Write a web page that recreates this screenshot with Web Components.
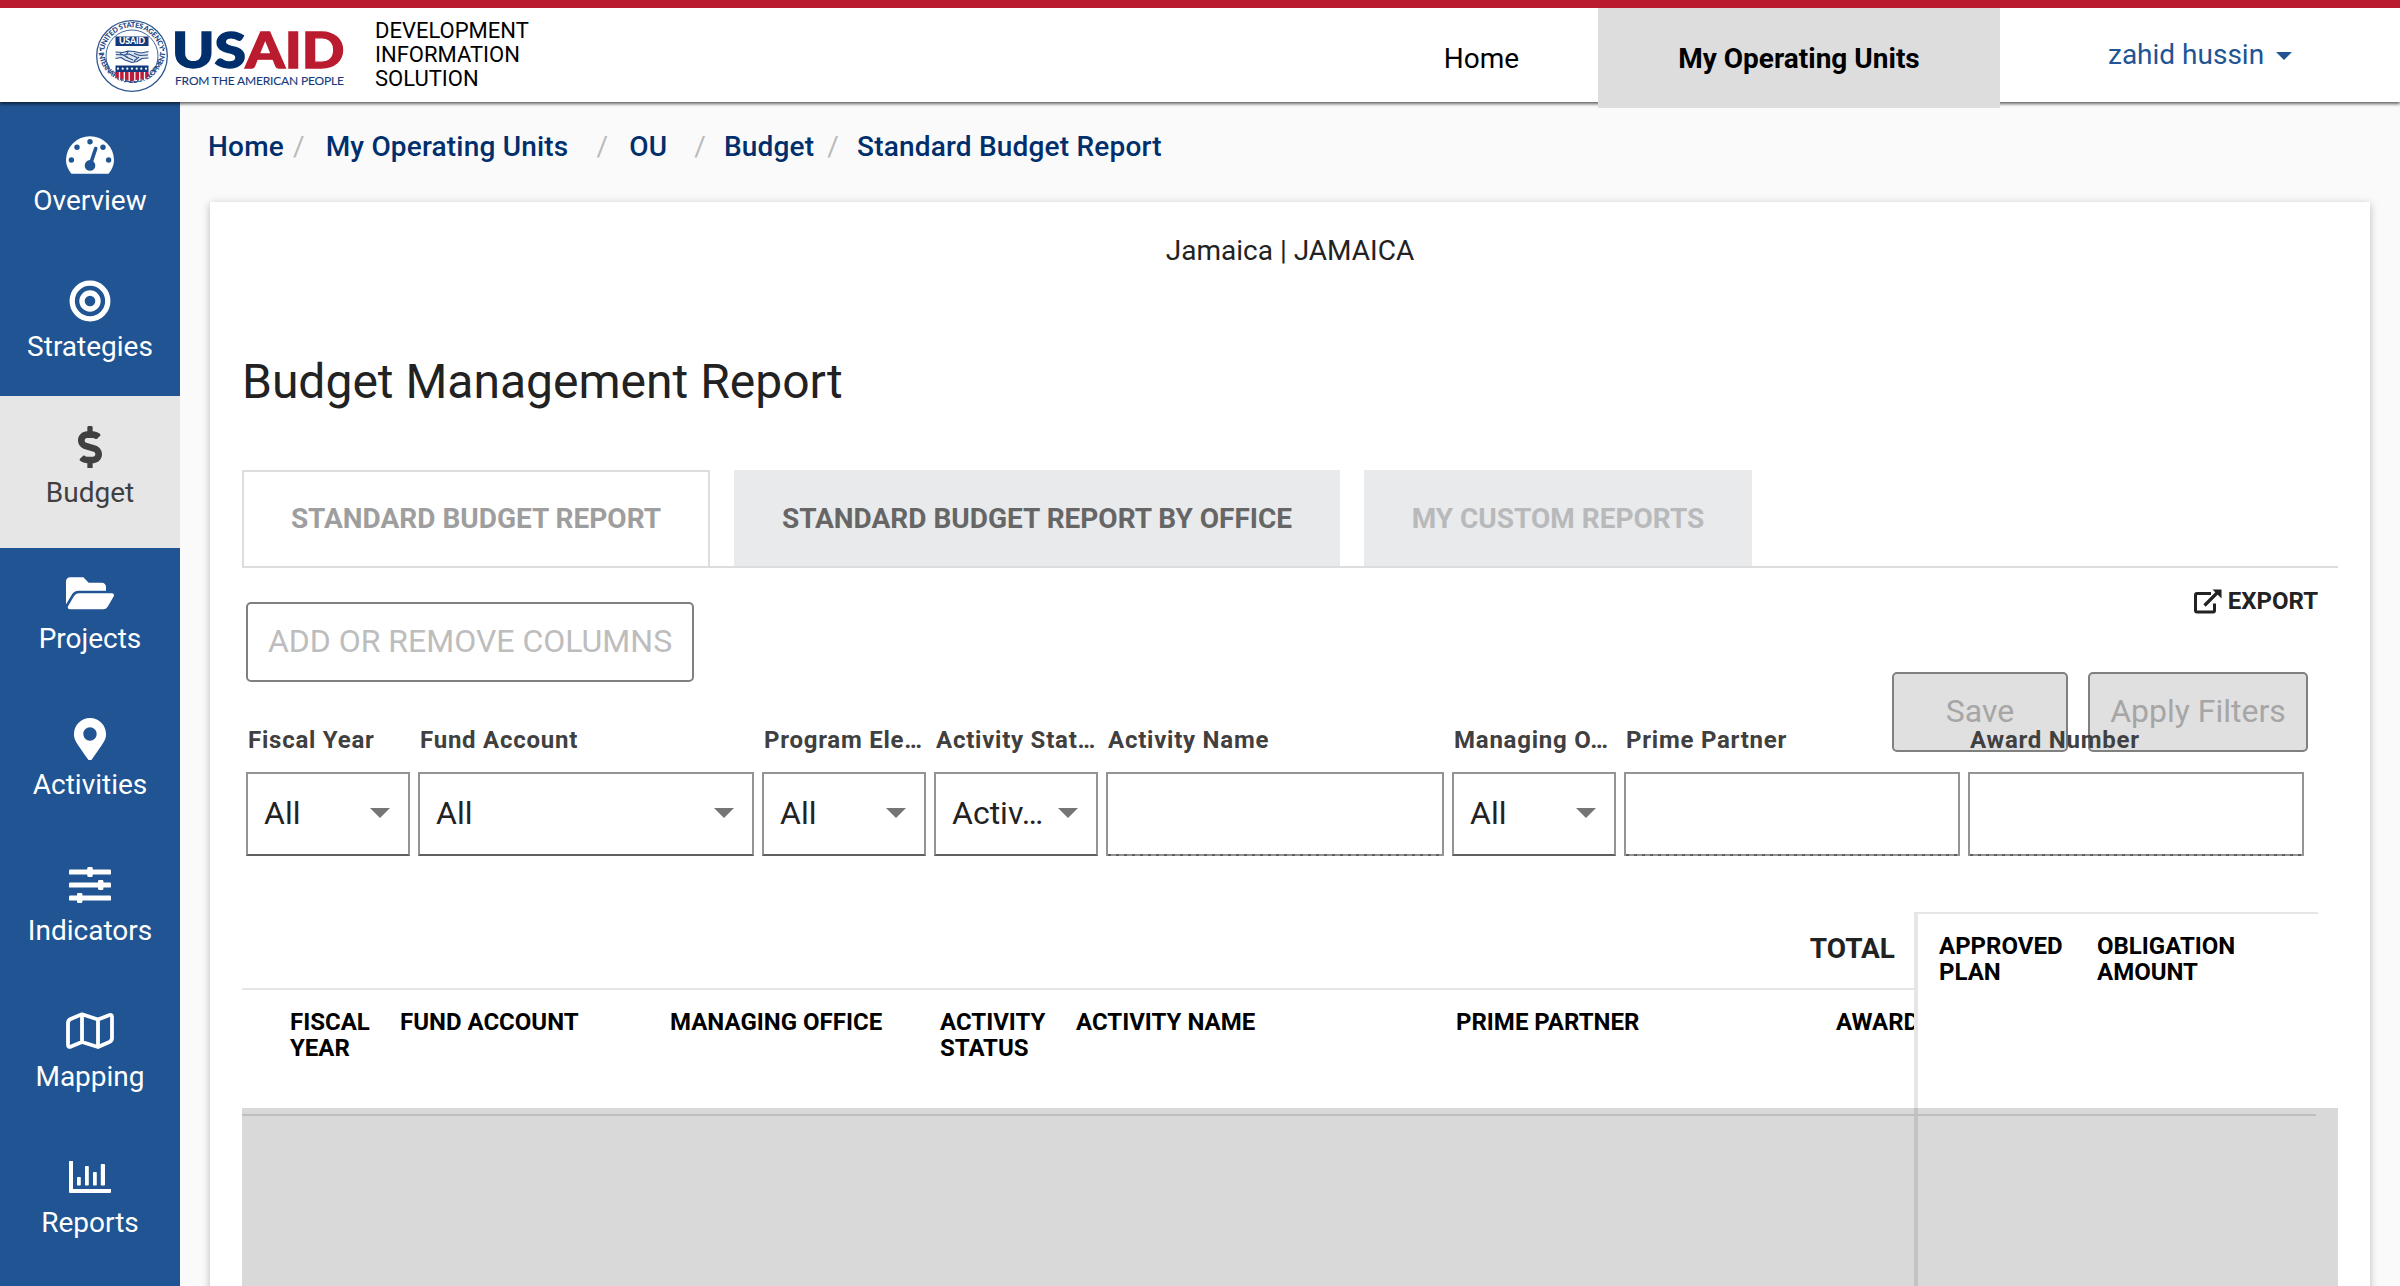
<!DOCTYPE html>
<html lang="en">
<head>
<meta charset="utf-8">
<title>Budget Management Report</title>
<style>
html,body{margin:0;height:1286px;overflow:hidden}
body{font-family:Roboto,"Liberation Sans",sans-serif;background:#fafafa;color:#222;font-size:28px}
</style>
</head>
<body>
<dis-app></dis-app>
<script>
function define(name, css, html) {
  const t = document.createElement('template');
  t.innerHTML = `<style>*{box-sizing:border-box}${css}</style>${html}`;
  customElements.define(name, class extends HTMLElement {
    constructor() {
      super();
      this.attachShadow({mode: 'open'}).append(t.content.cloneNode(true));
    }
  });
}

/* ---------- header ---------- */
define('usaid-logo', `:host{display:block;width:250px;height:80px}svg{display:block}`, `
<svg width="250" height="80" viewBox="94 16 250 80" font-family="Lato,'Open Sans',sans-serif">
  <defs>
    <path id="top" d="M104.200 61 A28.300 28.300 0 1 1 159.800 61"/>
    <path id="bot" d="M98.600 53 A33.600 33.600 0 0 0 165.400 53"/>
  </defs>
  <g fill="none" stroke="#2f5792"><circle cx="132" cy="56" r="35.300" stroke-width="1.300"/><circle cx="132" cy="56" r="26" stroke-width=".9"/></g>
  <g fill="#1d4583" font-weight="900" font-size="7.200">
    <text><textPath href="#top" startOffset="50%" text-anchor="middle" textLength="78">UNITED STATES AGENCY</textPath></text>
    <text><textPath href="#bot" startOffset="50%" text-anchor="middle" textLength="99">INTERNATIONAL DEVELOPMENT</textPath></text>
    <circle cx="100.600" cy="50" r="1"/><circle cx="163.400" cy="50" r="1"/>
  </g>
  <rect x="115.500" y="36.500" width="33" height="9.500" fill="#12397b"/>
  <text x="119" y="44.300" font-size="8.600" font-weight="900" fill="#fff" textLength="26">USAID</text>
  <g fill="#dfe6f0" stroke="#2a4f89" stroke-width="1.200" stroke-linejoin="round">
    <path d="M115.500 52 L123 52.500 L128 51 L134 51.500 L141 53 L148.500 51.500 V58 L142 58.500 L137 61.500 L132 62.500 L125 60 L121 57.500 L115.500 58.500Z" stroke="none"/>
    <path fill="none" d="M115.500 52 L123 52.500 L128 51 L134 51.500 L141 53 L148.500 51.500 M148.500 58 L142 58.500 L137 61.500 L132 62.500 L125 60 L121 57.500 L115.500 58.500 M116 54.500 L124 55 L129 54 L137 57.500 M126 57 L133 60 M128 51.500 L126 55 M148 55 L140 55.500 L134 53.500 M120 53.500 L128 57.500 M139 57 L134 61"/>
  </g>
  <path fill="#12397b" d="M115.500 65.500H148.500V72H115.500Z"/>
  <g fill="#fff"><circle cx="118" cy="68.700" r="1.100"/><circle cx="122.700" cy="68.700" r="1.100"/><circle cx="127.300" cy="68.700" r="1.100"/><circle cx="132" cy="68.700" r="1.100"/><circle cx="136.700" cy="68.700" r="1.100"/><circle cx="141.300" cy="68.700" r="1.100"/><circle cx="146" cy="68.700" r="1.100"/></g>
  <path fill="#ba1b3a" d="M115.500 72H148.500V76Q147 79 142 79.300Q135 79.500 132 81.500Q129 79.500 122 79.300Q117 79 115.500 76Z"/>
  <path stroke="#fff" stroke-width="1.300" d="M119.500 72v8M124.300 72v9M129.200 72v9M134.800 72v9M139.700 72v9M144.500 72v8"/>
  <text y="68" font-size="48.500" font-weight="900" stroke-width="1.300"><tspan x="172" fill="#002f6c" stroke="#002f6c" textLength="74" lengthAdjust="spacingAndGlyphs">US</tspan><tspan x="245.500" fill="#ba1b2e" stroke="#ba1b2e" textLength="99" lengthAdjust="spacingAndGlyphs">AID</tspan></text>
  <text x="175" y="84.800" font-size="12" fill="#12397b" stroke="#12397b" stroke-width=".1" textLength="169">FROM THE AMERICAN PEOPLE</text>
</svg>`);

define('nav-link', `
:host{display:flex;align-items:center;justify-content:center;height:100px;width:233px;color:#000;line-height:32px;padding-top:1px}
:host([active]){width:402px;background:#ddd;font-weight:700}`, `<slot></slot>`);

define('user-menu', `
:host{display:flex;align-items:center;gap:12px;color:#205493;line-height:32px;margin:-7px 0 0}
i{width:0;height:0;border:8px solid transparent;border-top-color:#205493;border-bottom:0;margin-top:2px}`, `<slot></slot><i></i>`);

define('app-header', `
:host{display:flex;align-items:flex-start;height:102px;border-top:8px solid #ba1b2e;background:#fff;box-shadow:0 2px 3px 0 rgba(0,0,0,.6);position:relative;z-index:2}
usaid-logo{margin:8px 0 0 94px}
.name{margin:11px 0 0 31px;font-size:22px;line-height:24px;color:#000;white-space:pre}
nav{display:flex;margin-left:auto}
.user{width:400px;height:100px;display:flex;align-items:center;padding-left:108px}`, `
<usaid-logo></usaid-logo>
<div class="name">DEVELOPMENT
INFORMATION
SOLUTION</div>
<nav><nav-link>Home</nav-link><nav-link active>My Operating Units</nav-link></nav>
<div class="user"><user-menu>zahid hussin</user-menu></div>`);

/* ---------- sidebar ---------- */
define('side-item', `
:host{display:flex;flex-direction:column;align-items:center;height:146px;padding-top:27px;color:#fff;fill:#fff;stroke:#fff}
:host([active]){background:#e6e6e6;color:#404040;fill:#404040;height:152px;margin-bottom:-6px}
.icon{height:48px;display:flex;align-items:center;margin-bottom:6px}
.label{line-height:32px}`, `<div class="icon"><slot name="icon"></slot></div><div class="label"><slot></slot></div>`);

define('side-nav', `
:host{display:block;width:180px;padding-top:2px;background:#205493;flex:none}
svg{display:block;stroke:none}.k{stroke:inherit;fill:none;stroke:#fff}`, `
<side-item><svg slot="icon" width="48" height="38"><path d="M5 37.200C2 33.500 0 29 0 24A24 23.700 0 0 1 48 24C48 29 46 33.500 43 37.200Q42.600 37.700 42 37.700H6Q5.400 37.700 5 37.200Z"/><g fill="#205493"><circle cx="24" cy="5.700" r="2.700"/><circle cx="11" cy="11.300" r="2.700"/><circle cx="37" cy="11.300" r="2.700"/><circle cx="5.400" cy="24" r="2.700"/><circle cx="42.600" cy="24" r="2.700"/><circle cx="24" cy="29.400" r="5.300"/></g><path d="M29.700 12.500L24.500 28" stroke="#205493" stroke-width="3.600" stroke-linecap="round"/></svg>Overview</side-item>
<side-item><svg slot="icon" class="k" width="42" height="42"><circle cx="21" cy="21" r="17.800" stroke-width="5.300"/><circle cx="21" cy="21" r="8" stroke-width="5.400"/></svg>Strategies</side-item>
<side-item active><svg slot="icon" width="24" height="42.700" viewBox="0 0 288 512"><path d="M209.200 233.400l-108-31.600C88.700 198.200 80 186.500 80 173.500c0-16.300 13.200-29.500 29.500-29.500h66.300c12.200 0 24.200 3.700 34.200 10.500 6.100 4.100 14.300 3.100 19.500-2l34.800-34c7.100-6.900 6.100-18.400-1.800-24.500C238 74.800 207.400 64.100 176 64V16c0-8.800-7.200-16-16-16h-32c-8.800 0-16 7.200-16 16v48h-2.500C45.800 64-5.400 118.700.5 183.600c4.200 46.100 39.400 83.600 83.800 96.600l102.500 30c12.500 3.700 21.200 15.300 21.200 28.300 0 16.300-13.200 29.500-29.500 29.500h-66.300C100 368 88 364.300 78 357.500c-6.100-4.100-14.300-3.100-19.500 2l-34.800 34c-7.100 6.900-6.100 18.400 1.800 24.500 24.500 19.200 55.100 29.900 86.500 30v48c0 8.800 7.200 16 16 16h32c8.800 0 16-7.200 16-16v-48.200c46.600-.9 90.300-28.600 105.700-72.700 21.500-61.600-14.600-124.800-72.500-141.700z"/></svg>Budget</side-item>
<side-item><svg slot="icon" width="48" height="42.700" viewBox="0 0 576 512"><path d="M572.694 292.093L500.270 416.248A63.997 63.997 0 0 1 444.989 448H45.025c-18.523 0-30.064-20.093-20.731-36.093l72.424-124.155A64 64 0 0 1 152 256h399.964c18.523 0 30.064 20.093 20.730 36.093zM152 224h328v-48c0-26.510-21.490-48-48-48H272l-64-64H48C21.490 64 0 85.490 0 112v278.046l69.077-118.418C86.214 242.250 117.989 224 152 224z"/></svg>Projects</side-item>
<side-item><svg slot="icon" width="32" height="42.700" viewBox="0 0 384 512"><path d="M172.268 501.670C26.970 291.031 0 269.413 0 192 0 85.961 85.961 0 192 0s192 85.961 192 192c0 77.413-26.970 99.031-172.268 309.670-9.535 13.774-29.930 13.773-39.464 0zM192 272c44.183 0 80-35.817 80-80s-35.817-80-80-80-80 35.817-80 80 35.817 80 80 80z"/></svg>Activities</side-item>
<side-item><svg slot="icon" width="42" height="38"><rect y="3.400" width="42" height="5.200" rx="1.200"/><rect y="16.400" width="42" height="5.200" rx="1.200"/><rect y="29.400" width="42" height="5.200" rx="1.200"/><rect x="18.300" y="1" width="5.400" height="10" rx="1.300"/><rect x="29" y="14" width="5.400" height="10" rx="1.300"/><rect x="8" y="27" width="5.400" height="10" rx="1.300"/></svg>Indicators</side-item>
<side-item><svg slot="icon" class="k" width="48" height="38"><path stroke-width="3.800" stroke-linejoin="round" d="M2 11Q2 8 4.600 6.900L16 2.300L32 7.500L43 3.200Q46 2.300 46 5V26Q46 28.800 43.400 29.900L32 35L16 30L5 34.600Q2 35.600 2 32.500ZM16 2.300V30M32 7.500V35"/></svg>Mapping</side-item>
<side-item><svg slot="icon" width="42" height="32"><path d="M0 0H4V28H42V31Q42 32 41 32H1Q0 32 0 31Z"/><rect x="8" y="16" width="3.800" height="8.500" rx=".8"/><rect x="16" y="5" width="3.800" height="19.500" rx=".8"/><rect x="24" y="11" width="3.800" height="13.500" rx=".8"/><rect x="31.800" y="3" width="4.200" height="21.500" rx=".8"/></svg>Reports</side-item>`);

/* ---------- breadcrumbs ---------- */
define('bread-crumbs', `
:host{display:flex;height:100px;padding:29px 0 0 28px;line-height:32px;font-weight:500;letter-spacing:.19px;color:#002f6c;white-space:pre}`, `<slot></slot>`);

/* ---------- tabs ---------- */
define('report-tab', `
:host{display:flex;align-items:center;justify-content:center;height:96px;background:#e9eaec;color:#b8b9bb;font-weight:700;line-height:32px;padding-top:2px}
:host([current]){background:#fff;border:2px solid #ddd;border-bottom:0;color:#9e9e9e;padding-top:0}
:host([strong]){color:#666}`, `<slot></slot>`);

/* ---------- buttons & fields ---------- */
define('dis-button', `
:host{display:flex;align-items:center;justify-content:center;height:80px;border:2px solid #808080;border-radius:5px;font-size:32px;line-height:38px;color:#bdbdbd;padding-bottom:3px}
:host([filled]){background:#e0e0e0;color:#a6a6a6}`, `<slot></slot>`);

define('filter-field', `
:host{display:block;min-width:0}
.l{font-size:24px;font-weight:700;letter-spacing:.76px;line-height:28px;color:#404040;padding-left:2px;white-space:nowrap}
.box{margin-top:18px;height:84px;border:2px solid #949494;border-bottom-color:#5f5f5f;display:flex;align-items:center;justify-content:space-between;padding:0 18px 2px 16px;font-size:32px;color:#222;line-height:38px}
i{width:0;height:0;border:10px solid transparent;border-top-color:#757575;border-bottom:0}
:host([input]) i{display:none}
:host([input]) .box{border-bottom:0;background:linear-gradient(to right,#5f5f5f 33%,#949494 0) 0 100%/8px 2px repeat-x}`, `
<div class="l"><slot name="label"></slot></div><div class="box"><slot></slot><i></i></div>`);

/* ---------- table ---------- */
define('budget-table', `
:host{display:block;margin-top:56px;height:400px;position:relative;font-weight:700;font-size:24px;line-height:26px;color:#000}
.cols{display:flex;height:202px}
.left{width:1672px;overflow:hidden}
.total{height:78px;border-bottom:2px solid #e6e6e6;display:flex;justify-content:flex-end;padding:21px 19px 0 0;font-size:28px;line-height:32px;color:#222}
.head{display:flex;padding:19px 0 0 48px;white-space:pre}
.head>span{flex:none}
.right{width:404px;border-top:2px solid #e6e6e6;border-left:4px solid #e6e6e6;display:flex;padding:19px 0 0 21px;white-space:pre}
.right span{width:158px;flex:none}
.body{display:flex;height:198px}
.body b{width:1672px;border-top:2px solid #e0e0e0}
.body b+b{width:402px;border-left:4px solid #e6e6e6}
.busy{position:absolute;top:196px;left:0;right:0;bottom:0;background:rgba(0,0,0,.15)}`, `
<div class="cols"><div class="left"><div class="total">TOTAL</div>
<div class="head"><span style="width:110px">FISCAL
YEAR</span><span style="width:270px">FUND ACCOUNT</span><span style="width:270px">MANAGING OFFICE</span><span style="width:136px">ACTIVITY
STATUS</span><span style="width:380px">ACTIVITY NAME</span><span style="width:380px">PRIME PARTNER</span><span>AWARD</span></div></div>
<div class="right"><span>APPROVED
PLAN</span><span>OBLIGATION
AMOUNT</span></div></div>
<div class="body"><b></b><b></b></div>
<div class="busy"></div>`);

/* ---------- report card ---------- */
define('report-card', `
:host{display:block;background:#fff;margin:0 30px;height:1100px;padding:0 32px;box-shadow:0 2px 8px rgba(0,0,0,.26)}
.ou{text-align:center;padding-top:33px;line-height:32px}
h1{margin:83px 0 0;font-size:48px;line-height:64px;font-weight:400}
.tabs{display:flex;gap:24px;margin-top:56px;border-bottom:2px solid #ddd}
.tools{display:flex;justify-content:space-between;height:184px}
.add{width:448px;margin:34px 0 0 4px}
.side{display:flex;flex-direction:column;align-items:flex-end;justify-content:space-between;padding:18px 20px 0 0}
.export{display:flex;gap:6px;align-items:center;font-size:24px;font-weight:700;line-height:30px}
.btns{display:flex;gap:20px;margin-right:10px}
.filters{display:grid;grid-template-columns:164px 336px 164px 164px 338px 164px 336px 336px;gap:8px;margin:-26px 0 0 4px;position:relative;z-index:1}`, `
<div class="ou">Jamaica | JAMAICA</div>
<h1>Budget Management Report</h1>
<div class="tabs"><report-tab current style="width:468px">STANDARD BUDGET REPORT</report-tab><report-tab strong style="width:606px">STANDARD BUDGET REPORT BY OFFICE</report-tab><report-tab style="width:388px">MY CUSTOM REPORTS</report-tab></div>
<div class="tools"><dis-button class="add">ADD OR REMOVE COLUMNS</dis-button>
<div class="side"><div class="export"><svg width="28" height="25" viewBox="0 0 28 25" fill="none" stroke="#222" stroke-width="3"><path d="M17 4.500H3Q1.500 4.500 1.500 6V21.500Q1.500 23 3 23H19Q20.500 23 20.500 21.500V14.500"/><path d="M10.500 16.500L23 4" stroke-width="3.200"/><path d="M18.500.500H27.500V9.500Z" fill="#222" stroke="none"/></svg>EXPORT</div>
<div class="btns"><dis-button filled style="width:176px">Save</dis-button><dis-button filled style="width:220px">Apply Filters</dis-button></div></div></div>
<div class="filters">
<filter-field><span slot="label">Fiscal Year</span>All</filter-field>
<filter-field><span slot="label">Fund Account</span>All</filter-field>
<filter-field><span slot="label">Program Ele…</span>All</filter-field>
<filter-field><span slot="label">Activity Stat…</span>Activ…</filter-field>
<filter-field input><span slot="label">Activity Name</span></filter-field>
<filter-field><span slot="label">Managing O…</span>All</filter-field>
<filter-field input><span slot="label">Prime Partner</span></filter-field>
<filter-field input><span slot="label">Award Number</span></filter-field>
</div>
<budget-table></budget-table>`);

define('dis-app', `
:host{display:flex;flex-direction:column;height:1286px;overflow:hidden}
.row{display:flex;flex:1;min-height:0}
main{flex:1;min-width:0}
s{text-decoration:none;font-weight:400;color:#bbb}`, `
<app-header></app-header>
<div class="row"><side-nav></side-nav>
<main><bread-crumbs><span>Home</span><s style="margin:0 21px 0 9px">/</s><span>My Operating Units</span><s style="margin:0 21px 0 28px">/</s><span>OU</span><s style="margin:0 18px 0 27px">/</s><span>Budget</span><s style="margin:0 18px 0 13px">/</s><span>Standard Budget Report</span></bread-crumbs>
<report-card></report-card></main></div>`);
</script>
</body>
</html>
